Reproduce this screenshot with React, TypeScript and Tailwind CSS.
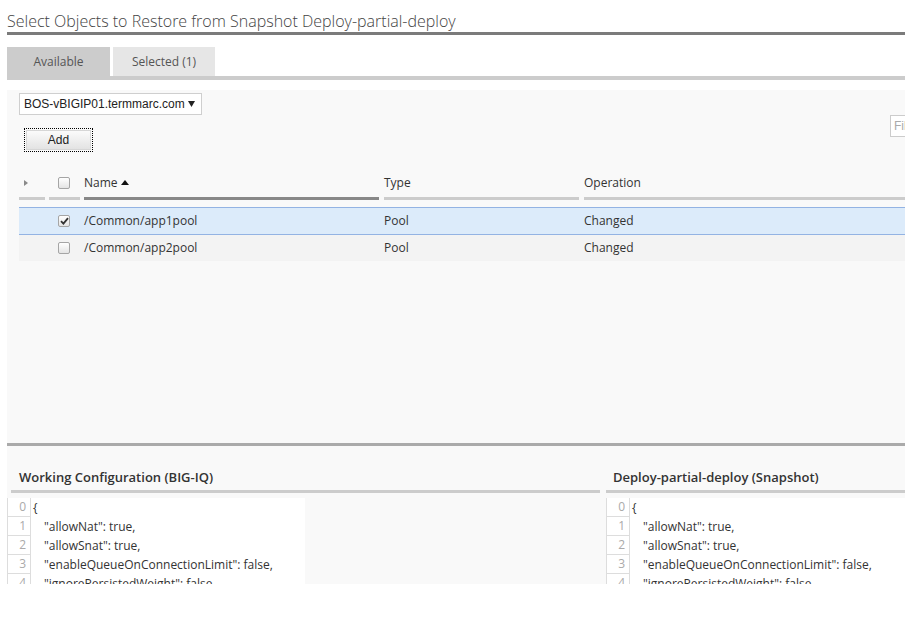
import React from 'react';

const codeLines = [
  { text: '{', indent: false },
  { text: '"allowNat": true,', indent: true },
  { text: '"allowSnat": true,', indent: true },
  { text: '"enableQueueOnConnectionLimit": false,', indent: true },
  { text: '"ignorePersistedWeight": false,', indent: true },
];

const Checkbox = ({ checked }: { checked?: boolean }) => (
  <span className="relative inline-flex h-[12px] w-[12px] items-center justify-center rounded-[2px] border border-[#a5a5a5] bg-gradient-to-b from-white to-[#e4e4e4]">
    {checked && (
      <svg width="9" height="8" viewBox="0 0 9 8">
        <path d="M1 4.2 L3.4 6.6 L8 1.2" fill="none" stroke="#333" strokeWidth="1.8" />
      </svg>
    )}
  </span>
);

const rows = [
  { name: '/Common/app1pool', type: 'Pool', op: 'Changed', selected: true },
  { name: '/Common/app2pool', type: 'Pool', op: 'Changed', selected: false },
];

const CodeView = ({ wide }: { wide?: boolean }) => (
  <div className={`mt-[5px] bg-white ${wide ? 'w-full' : 'w-[298px]'}`}>
    {codeLines.map((line, i) => (
      <div key={i} className="flex h-[19px]">
        <div className="w-[24px] shrink-0 border-x border-b border-[#ddd] pr-[4px] text-right text-[12px] leading-[18px] text-[#aaa]">
          {i}
        </div>
        <div
          className={`whitespace-pre text-[12px] leading-[19px] text-[#333] ${
            line.indent ? 'pl-[13px]' : 'pl-[2px]'
          }`}
        >
          {line.text}
        </div>
      </div>
    ))}
  </div>
);

export default function App() {
  return (
    <div
      className="h-[618px] w-[905px] overflow-hidden bg-white text-[#333]"
      style={{ fontFamily: '"Open Sans", sans-serif' }}
    >
      <div className="w-[930px] pl-[7px]">
        {/* title */}
        <div className="border-b-[3px] border-[#7b7b7b] pt-[10px]">
          <h1 className="text-[16px] font-light leading-[22px] text-[#444]">
            Select Objects to Restore from Snapshot Deploy-partial-deploy
          </h1>
        </div>

        {/* tabs */}
        <div className="mt-[12px] flex gap-[3px] border-b-4 border-[#cccccc]">
          <div className="flex h-[29px] w-[103px] items-center justify-center bg-[#cccccc] text-[12px] text-[#555]">
            Available
          </div>
          <div className="flex h-[29px] w-[102px] items-center justify-center bg-[#e6e6e6] text-[12px] text-[#555]">
            Selected (1)
          </div>
        </div>

        {/* available objects panel */}
        <div className="mt-[10px] h-[353px] bg-[#f9f9f9] pl-[12px]">
          <div className="flex items-start justify-between pt-[3px]">
            <div>
              <div
                className="flex h-[22px] w-[183px] items-center justify-between border border-[#cfcfcf] bg-white pl-[4px] pr-[6px] text-[12px] text-[#222]"
                style={{ fontFamily: '"Liberation Sans", Arial, sans-serif' }}
              >
                <span>BOS-vBIGIP01.termmarc.com</span>
                <svg width="7" height="6" viewBox="0 0 7 6">
                  <path d="M0 0 H7 L3.5 6 Z" fill="#222" />
                </svg>
              </div>
              <div className="ml-[5px] mt-[13px] h-[24px] w-[69px] border border-dotted border-black p-px">
                <div
                  className="flex h-full w-full items-center justify-center border border-[#d6d6d6] bg-gradient-to-b from-[#fbfbfb] to-[#e3e3e3] text-[12px] text-[#222]"
                  style={{ fontFamily: '"Liberation Sans", Arial, sans-serif' }}
                >
                  Add
                </div>
              </div>
            </div>
            <div
              className="mt-[22px] flex h-[22px] w-[40px] items-center border border-[#ccc] bg-white pl-[3px] text-[12px] text-[#aaa]"
              style={{ fontFamily: '"Liberation Sans", Arial, sans-serif' }}
            >
              Filter
            </div>
          </div>

          {/* header */}
          <div className="mt-[20px] grid grid-cols-[30px_35px_300px_200px_1fr] text-[12px]">
            <div className="pr-[4px]">
              <div className="flex h-[28px] items-center border-b-[3px] border-[#cccccc] pb-[3px] pl-[5px]">
                <svg width="4" height="6" viewBox="0 0 4 6">
                  <path d="M0 0 L4 3 L0 6 Z" fill="#8a8a8a" />
                </svg>
              </div>
            </div>
            <div className="pr-[4px]">
              <div className="flex h-[28px] items-center border-b-[3px] border-[#cccccc] pb-[3px] pl-[9px]">
                <Checkbox />
              </div>
            </div>
            <div className="pr-[5px]">
              <div className="flex h-[28px] items-center gap-[3px] border-b-[3px] border-[#888] pb-[3px] text-[#333]">
                Name
                <svg width="8" height="5" viewBox="0 0 8 5" className="mb-[2px]">
                  <path d="M0 5 L4 0 L8 5 Z" fill="#111" />
                </svg>
              </div>
            </div>
            <div className="pr-[5px]">
              <div className="flex h-[28px] items-center border-b-[3px] border-[#cccccc] pb-[3px] text-[#333]">
                Type
              </div>
            </div>
            <div>
              <div className="flex h-[28px] items-center border-b-[3px] border-[#cccccc] pb-[3px] text-[#333]">
                Operation
              </div>
            </div>
          </div>

          {/* rows */}
          <div className="mt-[7px]">
            {rows.map((r) => (
              <div
                key={r.name}
                className={`grid grid-cols-[30px_35px_300px_200px_1fr] items-center text-[12px] text-[#333] ${
                  r.selected ? 'h-[28px] border-y border-[#93b3e3] bg-[#dcebfa]' : 'h-[26px] bg-[#f3f3f3]'
                }`}
              >
                <div />
                <div className="flex pl-[9px]">
                  <Checkbox checked={r.selected} />
                </div>
                <div>{r.name}</div>
                <div>{r.type}</div>
                <div>{r.op}</div>
              </div>
            ))}
          </div>
        </div>

        {/* comparison */}
        <div className="h-[141px] overflow-hidden border-t-[3px] border-[#aaaaaa] bg-[#f9f9f9]">
          <div className="flex gap-[6px] pt-[21px]">
            <div className="w-[593px]">
              <div className="pl-[4px]">
                <div className="border-b-[3px] border-[#cccccc] pb-[3px] pl-[8px] text-[13px] font-semibold leading-[20px] text-[#333]">
                  Working Configuration (BIG-IQ)
                </div>
              </div>
              <CodeView />
            </div>
            <div className="flex-1">
              <div className="border-b-[3px] border-[#cccccc] pb-[3px] pl-[7px] text-[13px] font-semibold leading-[20px] text-[#333]">
                Deploy-partial-deploy (Snapshot)
              </div>
              <CodeView wide />
            </div>
          </div>
        </div>
      </div>
    </div>
  );
}
